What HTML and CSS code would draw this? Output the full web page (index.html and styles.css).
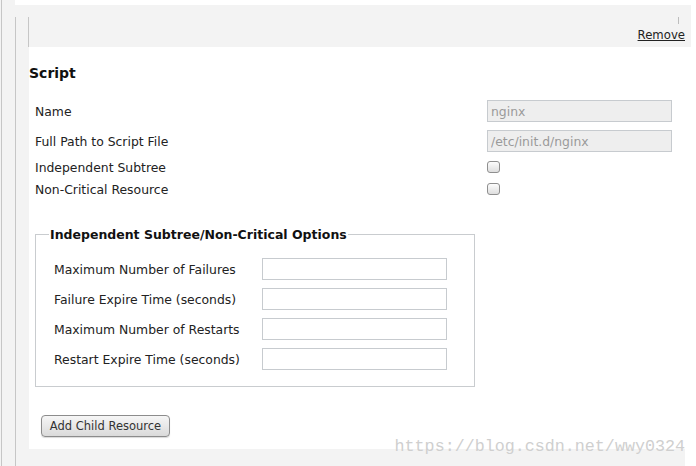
FILE: index.html
```html
<!DOCTYPE html>
<html>
<head>
<meta charset="utf-8">
<link rel="stylesheet" href="styles.css">
</head>
<body>
<div class="page">
  <div class="rail"></div>
  <div class="main">
    <div class="panel">
      <div class="resource">
        <div class="res-head">
          <span class="tick"></span>
          <a class="remove" href="#">Remove</a>
        </div>
        <div class="res-body">
          <h3 class="title">Script</h3>
          <div class="form">
            <div class="row row-text">
              <label class="lbl">Name</label>
              <input class="field field-ro" type="text" value="nginx" readonly>
            </div>
            <div class="row row-text">
              <label class="lbl">Full Path to Script File</label>
              <input class="field field-ro" type="text" value="/etc/init.d/nginx" readonly>
            </div>
            <div class="row row-check">
              <label class="lbl">Independent Subtree</label>
              <input class="check" type="checkbox">
            </div>
            <div class="row row-check">
              <label class="lbl">Non-Critical Resource</label>
              <input class="check" type="checkbox">
            </div>
          </div>
          <fieldset class="opts">
            <legend class="opts-legend">Independent Subtree/Non-Critical Options</legend>
            <div class="opt-row">
              <label class="opt-lbl">Maximum Number of Failures</label>
              <input class="field" type="text">
            </div>
            <div class="opt-row">
              <label class="opt-lbl">Failure Expire Time (seconds)</label>
              <input class="field" type="text">
            </div>
            <div class="opt-row">
              <label class="opt-lbl">Maximum Number of Restarts</label>
              <input class="field" type="text">
            </div>
            <div class="opt-row">
              <label class="opt-lbl">Restart Expire Time (seconds)</label>
              <input class="field" type="text">
            </div>
          </fieldset>
          <button class="btn" type="button">Add Child Resource</button>
        </div>
      </div>
    </div>
    <div class="next"></div>
  </div>
  <div class="watermark">https://blog.csdn.net/wwy0324</div>
</div>
</body>
</html>
```

FILE: styles.css
```css
html, body {
  margin: 0;
  padding: 0;
  background: #ffffff;
}
body {
  font-family: "DejaVu Sans", sans-serif;
  color: #222;
  width: 696px;
  height: 466px;
  overflow: hidden;
}
.page {
  position: relative;
  display: flex;
  height: 466px;
}
.rail {
  width: 15px;
  flex: none;
  background: linear-gradient(to right, #f3f3f3 1px, #c6c6c6 1px, #c6c6c6 2px, #f3f3f3 2px);
}
.main {
  flex: 1;
  display: flex;
  flex-direction: column;
  padding-top: 5px;
}
.panel {
  background: #f3f3f3;
  margin-right: 5px;
  padding-top: 12px;
}
.resource {
  border-left: 1px solid #c6c6c6;
}
.res-head {
  margin-left: 12px;
  border-left: 1px solid #c6c6c6;
  height: 30px;
  display: flex;
  flex-direction: column;
  align-items: flex-end;
  padding-right: 6px;
}
.tick {
  display: block;
  width: 1px;
  height: 7px;
  background: #bdbdbd;
  margin-right: 6px;
}
.remove {
  font-size: 11.7px;
  color: #222;
  text-decoration: underline;
  margin-top: 5px;
  line-height: 13px;
}
.res-body {
  margin-left: 13px;
  background: #ffffff;
  padding: 18px 0 12px 0;
}
.title {
  margin: 0;
  font-size: 14px;
  font-weight: bold;
  line-height: 17px;
  color: #111;
}
.form {
  margin-top: 14px;
  padding-left: 6px;
}
.row {
  display: flex;
  align-items: center;
}
.row-text {
  height: 30px;
}
.row-check {
  height: 22px;
}
.lbl {
  width: 452px;
  font-size: 12.4px;
  color: #222;
}
.field {
  box-sizing: border-box;
  width: 185px;
  height: 22px;
  border: 1px solid #c7cbcf;
  background: #ffffff;
  font-family: "DejaVu Sans", sans-serif;
  font-size: 12.4px;
  padding: 0 3px;
  margin: 0;
  outline: none;
}
.field-ro {
  background: #eeeeee;
  color: #9a9a9a;
}
.check {
  -webkit-appearance: none;
  appearance: none;
  box-sizing: border-box;
  width: 13px;
  height: 12px;
  margin: 0;
  border: 1px solid #8f8f8f;
  border-radius: 3px;
  background: linear-gradient(#fdfdfd, #dedede);
}
.opts {
  margin: 27px 0 0 6px;
  width: 440px;
  box-sizing: border-box;
  border: 1px solid #c9cccf;
  padding: 12px 0 12px 18px;
}
.opts-legend {
  font-size: 12.5px;
  font-weight: bold;
  color: #111;
  padding: 0 1px;
  margin-left: -5px;
}
.opt-row {
  display: flex;
  align-items: center;
  height: 30px;
}
.opt-lbl {
  width: 208px;
  font-size: 12.4px;
  color: #222;
}
.btn {
  margin: 28px 0 0 12px;
  box-sizing: border-box;
  width: 129px;
  height: 22px;
  border: 1px solid #8c8c8c;
  border-radius: 4px;
  background: linear-gradient(#f6f6f6, #dadada);
  box-shadow: 0 1px 1px rgba(0,0,0,0.15);
  font-family: "DejaVu Sans", sans-serif;
  font-size: 11.5px;
  color: #333;
  padding: 0;
  display: block;
}
.next {
  flex: 1;
  background: #f3f3f3;
  margin-right: 11px;
  border-left: 1px solid #c6c6c6;
}
.watermark {
  position: absolute;
  right: 11px;
  top: 435px;
  font-family: "Liberation Mono", monospace;
  font-size: 16.7px;
  line-height: 24px;
  color: #cfcfcf;
}
```
